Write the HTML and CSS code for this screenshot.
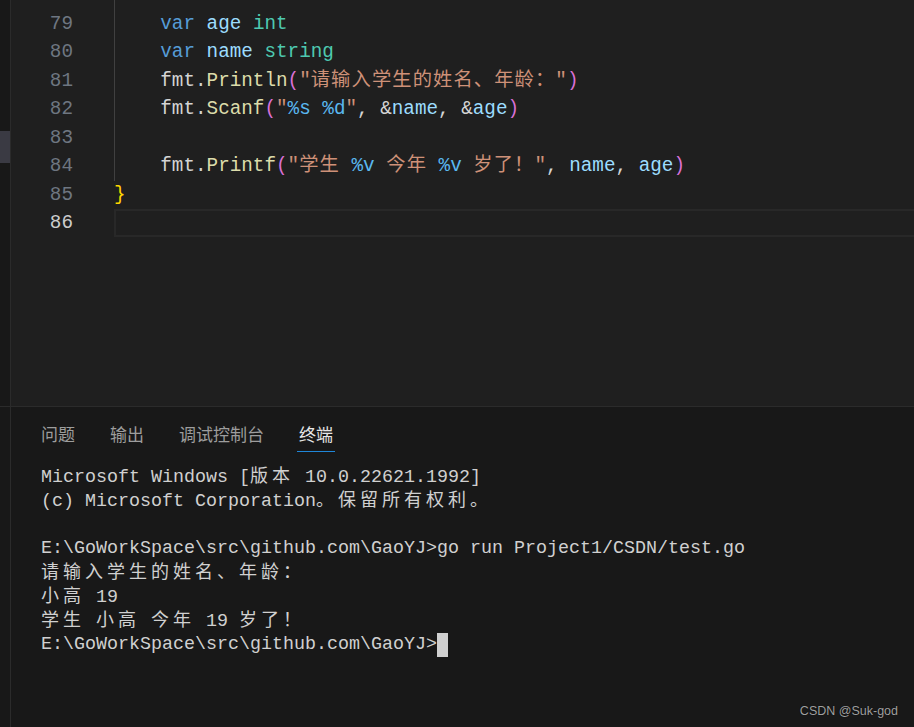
FILE: index.html
```html
<!DOCTYPE html>
<html lang="zh-CN">
<head>
    <meta charset="UTF-8">
    <title>test.go - Terminal</title>
    <link rel="stylesheet" href="styles.css">
</head>
<body>
    <div class="window">
        <div class="editor">
            <div class="rail"><div class="thumb"></div></div>
            <div class="lines">
                <div class="line"><span class="ln">78</span><span class="src guide"></span></div>
                <div class="line"><span class="ln">79</span><span class="src guide">    <span class="kw">var</span> <span class="vr">age</span> <span class="ty">int</span></span></div>
                <div class="line"><span class="ln">80</span><span class="src guide">    <span class="kw">var</span> <span class="vr">name</span> <span class="ty">string</span></span></div>
                <div class="line"><span class="ln">81</span><span class="src guide">    fmt.<span class="fn">Println</span><span class="br">(</span><span class="st">"<span class="cj">请输入学生的姓名、年龄：</span>"</span><span class="br">)</span></span></div>
                <div class="line"><span class="ln">82</span><span class="src guide">    fmt.<span class="fn">Scanf</span><span class="br">(</span><span class="st">"<span class="fm">%s %d</span>"</span>, &amp;<span class="vr">name</span>, &amp;<span class="vr">age</span><span class="br">)</span></span></div>
                <div class="line"><span class="ln">83</span><span class="src guide"></span></div>
                <div class="line"><span class="ln">84</span><span class="src guide">    fmt.<span class="fn">Printf</span><span class="br">(</span><span class="st">"<span class="cj">学生</span> <span class="fm">%v</span> <span class="cj">今年</span> <span class="fm">%v</span> <span class="cj">岁了！</span>"</span>, <span class="vr">name</span>, <span class="vr">age</span><span class="br">)</span></span></div>
                <div class="line"><span class="ln">85</span><span class="src"><span class="bk">}</span></span></div>
                <div class="line"><span class="ln active">86</span><span class="src current"></span></div>
            </div>
        </div>
        <div class="panel">
            <div class="rail"></div>
            <div class="panel-body">
                <div class="tabs">
                    <span class="tab">问题</span>
                    <span class="tab">输出</span>
                    <span class="tab">调试控制台</span>
                    <span class="tab on">终端</span>
                </div>
                <div class="term">
                    <div>Microsoft Windows [<span class="w">版本</span> 10.0.22621.1992]</div>
                    <div>(c) Microsoft Corporation<span class="w">。保留所有权利。</span></div>
                    <div> </div>
                    <div>E:\GoWorkSpace\src\github.com\GaoYJ&gt;go run Project1/CSDN/test.go</div>
                    <div><span class="w">请输入学生的姓名、年龄：</span></div>
                    <div><span class="w">小高</span> 19</div>
                    <div><span class="w">学生</span> <span class="w">小高</span> <span class="w">今年</span> 19 <span class="w">岁了！</span></div>
                    <div>E:\GoWorkSpace\src\github.com\GaoYJ&gt;<span class="cursor"></span></div>
                </div>
            </div>
        </div>
        <div class="mark">CSDN @Suk-god</div>
    </div>
</body>
</html>
```

FILE: styles.css
```css
:root {
    --editor-bg: #1f1f1f;
    --panel-bg: #181818;
    --border: #2b2b2b;
    --text: #cccccc;
}

body {
    margin: 0;
    background-color: var(--editor-bg);
    overflow: hidden;
}

.window {
    position: relative;
    width: 914px;
    height: 727px;
    display: flex;
    flex-direction: column;
}

.rail {
    width: 10px;
    flex: none;
    background-color: var(--panel-bg);
    border-right: 1px solid var(--border);
}
.thumb {
    margin-top: 131px;
    height: 32px;
    background-color: #3a3a43;
}

/* editor */
.editor {
    height: 406px;
    flex: none;
    display: flex;
    overflow: hidden;
    background-color: var(--editor-bg);
}
.lines {
    flex: 1;
    margin-top: -19px;
    font-family: "Liberation Mono", "Noto Sans CJK SC", monospace;
    font-size: 19.3px;
    color: #d4d4d4;
}
.line {
    display: flex;
    height: 28.5px;
    line-height: 28.5px;
}
.ln {
    width: 62px;
    flex: none;
    text-align: right;
    color: #6e7681;
}
.ln.active {
    color: #cccccc;
}
.src {
    flex: 1;
    margin-left: 41px;
    white-space: pre;
}
.src.guide {
    box-shadow: inset 1px 0 #404040;
}
.src.current {
    border: 2px solid #282828;
    border-right: none;
    box-sizing: border-box;
    height: 28px;
}

.kw { color: #569cd6; }
.vr { color: #9cdcfe; }
.ty { color: #4ec9b0; }
.fn { color: #dcdcaa; }
.br { color: #da70d6; }
.bk { color: #ffd700; }
.st { color: #ce9178; }
.fm { color: #5ab8f0; }
.cj {
    font-family: "Noto Sans CJK SC", sans-serif;
    letter-spacing: 1.1px;
    line-height: 1;
}

/* panel */
.panel {
    flex: 1;
    display: flex;
    border-top: 1px solid var(--border);
    background-color: var(--panel-bg);
}
.panel-body {
    flex: 1;
    padding-left: 28px;
}
.tabs {
    display: flex;
    gap: 31px;
    height: 45px;
    align-items: flex-end;
    font-family: "Noto Sans CJK SC", sans-serif;
    font-size: 17px;
}
.tab {
    padding: 0 2px 6px;
    line-height: 22px;
    color: #9d9d9d;
    border-bottom: 1px solid transparent;
}
.tab.on {
    color: #e7e7e7;
    border-bottom-color: #1f86d8;
}

.term {
    margin-top: 13px;
    padding-left: 2px;
    font-family: "Liberation Mono", "Noto Sans CJK SC", monospace;
    font-size: 18.33px;
    color: #d0d0d0;
}
.term div {
    height: 24px;
    line-height: 24px;
    white-space: pre;
}
.w {
    font-family: "Noto Sans CJK SC", sans-serif;
    font-size: 18px;
    letter-spacing: 4px;
    line-height: 1;
}
.cursor {
    display: inline-block;
    width: 11px;
    height: 24px;
    vertical-align: top;
    background-color: #d0d0d0;
}

.mark {
    position: absolute;
    right: 16px;
    bottom: 9px;
    font-family: "Liberation Sans", Arial, sans-serif;
    font-size: 12.5px;
    color: #a0a0a0;
    text-shadow: 0 0 1px #000;
}
```
